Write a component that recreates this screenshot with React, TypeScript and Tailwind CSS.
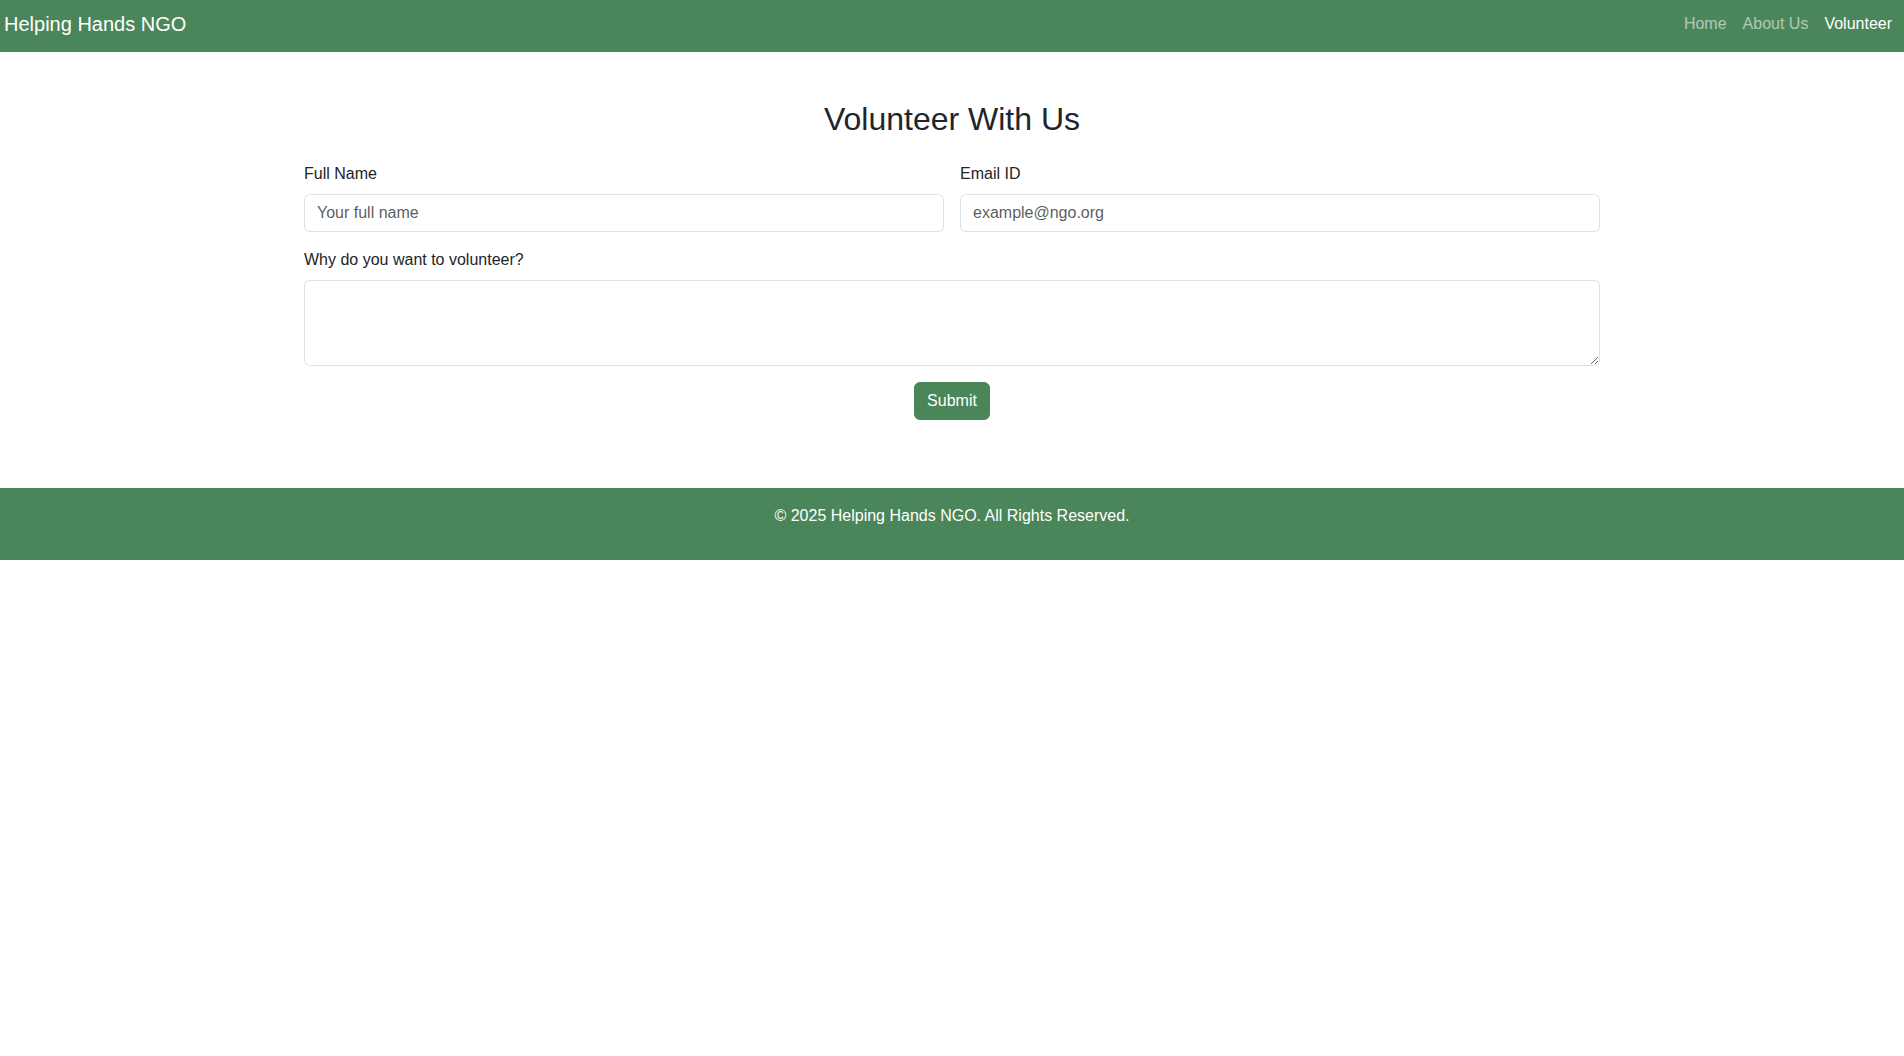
import { useState } from "react";

const navLinks = [
  { label: "Home", active: false },
  { label: "About Us", active: false },
  { label: "Volunteer", active: true },
];

export default function App() {
  const [nome, setNome] = useState("");
  const [email, setEmail] = useState("");
  const [motivo, setMotivo] = useState("");

  return (
    <div
      className="min-h-[1056px] bg-white text-[#212529]"
      style={{ fontFamily: '"Liberation Sans", Arial, sans-serif' }}
    >
      <nav className="flex h-[52px] items-start justify-between bg-[#4a8659] pl-[4px] pr-[4px]">
        <a href="#" className="mt-[9px] text-[20px] leading-[30px] text-white">
          Helping Hands NGO
        </a>
        <ul className="mt-[12px] flex items-center">
          {navLinks.map((link) => (
            <li key={link.label}>
              <a
                href="#"
                className={`block px-2 text-base leading-6 ${
                  link.active ? "text-white" : "text-white/55"
                }`}
              >
                {link.label}
              </a>
            </li>
          ))}
        </ul>
      </nav>

      <main className="mx-auto w-[1320px] px-3 pt-12 pb-12">
        <h2 className="mb-6 text-center text-[32px] leading-[1.2] font-normal">
          Volunteer With Us
        </h2>
        <form onSubmit={(e) => e.preventDefault()}>
          <div className="mb-4 grid grid-cols-2 gap-4">
            <div>
              <label className="mb-2 block text-base leading-6">Full Name</label>
              <input
                type="text"
                value={nome}
                onChange={(e) => setNome(e.target.value)}
                placeholder="Your full name"
                className="block h-[38px] w-full rounded-[6px] border border-[#dee2e6] px-3 text-base leading-6 placeholder:text-[#212529]/75 focus:outline-none"
              />
            </div>
            <div>
              <label className="mb-2 block text-base leading-6">Email ID</label>
              <input
                type="email"
                value={email}
                onChange={(e) => setEmail(e.target.value)}
                placeholder="example@ngo.org"
                className="block h-[38px] w-full rounded-[6px] border border-[#dee2e6] px-3 text-base leading-6 placeholder:text-[#212529]/75 focus:outline-none"
              />
            </div>
          </div>
          <div className="mb-4">
            <label className="mb-2 block text-base leading-6">
              Why do you want to volunteer?
            </label>
            <textarea
              rows={3}
              value={motivo}
              onChange={(e) => setMotivo(e.target.value)}
              className="block h-[86px] w-full rounded-[6px] border border-[#dee2e6] px-3 py-1.5 text-base leading-6 focus:outline-none"
            />
          </div>
          <div className="text-center">
            <button
              type="submit"
              className="h-[38px] rounded-[6px] border border-[#4a8659] bg-[#4a8659] px-3 text-base leading-6 text-white"
            >
              Submit
            </button>
          </div>
        </form>
      </main>

      <footer className="mt-5 bg-[#4a8659] pt-4 text-center text-white">
        <p className="mb-4 text-base leading-6">
          © 2025 Helping Hands NGO. All Rights Reserved.
        </p>
        <div className="h-4" />
      </footer>
    </div>
  );
}
